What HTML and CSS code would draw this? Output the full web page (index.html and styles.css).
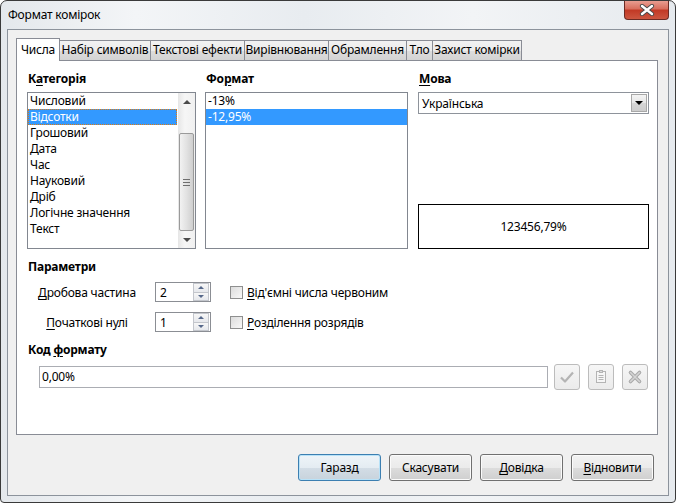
FILE: index.html
```html
<!DOCTYPE html>
<html lang="uk">
<head>
    <meta charset="UTF-8">
    <title>Формат комірок</title>
    <link rel="stylesheet" href="styles.css">
</head>
<body>
    <div class="window">
        <!-- Title bar -->
        <div class="titlebar">
            <span class="title">Формат комірок</span>
            <div class="close">
                <svg width="16" height="12" viewBox="0 0 16 12">
                    <path d="M3 2 L13 10 M13 2 L3 10" stroke="#4a4a4a" stroke-width="4.2" stroke-linecap="round"/>
                    <path d="M3 2 L13 10 M13 2 L3 10" stroke="#fff" stroke-width="2.4" stroke-linecap="round"/>
                </svg>
            </div>
        </div>

        <div class="client">
            <!-- Tabs -->
            <div class="tabs">
                <div class="tab active w-chysla">Числа</div>
                <div class="tab w-nabir">Набір символів</div>
                <div class="tab w-efekty">Текстові ефекти</div>
                <div class="tab w-vyr">Вирівнювання</div>
                <div class="tab w-obr">Обрамлення</div>
                <div class="tab w-tlo">Тло</div>
                <div class="tab w-zahyst">Захист комірки</div>
            </div>

            <div class="page">
                <div class="top">
                    <!-- Category -->
                    <div class="col col-cat">
                        <div class="heading">К<u>а</u>тегорія</div>
                        <div class="listbox">
                            <div class="items">
                                <div class="item">Числовий</div>
                                <div class="item selected focus">Відсотки</div>
                                <div class="item">Грошовий</div>
                                <div class="item">Дата</div>
                                <div class="item">Час</div>
                                <div class="item">Науковий</div>
                                <div class="item">Дріб</div>
                                <div class="item">Логічне значення</div>
                                <div class="item">Текст</div>
                            </div>
                            <div class="scrollbar">
                                <div class="sb-btn"><span class="tri-up"></span></div>
                                <div class="sb-track">
                                    <div class="sb-thumb"><span class="grip"></span></div>
                                </div>
                                <div class="sb-btn"><span class="tri-down"></span></div>
                            </div>
                        </div>
                    </div>

                    <!-- Format -->
                    <div class="col col-fmt">
                        <div class="heading">Фо<u>р</u>мат</div>
                        <div class="listbox">
                            <div class="items">
                                <div class="item">-13%</div>
                                <div class="item selected">-12,95%</div>
                            </div>
                        </div>
                    </div>

                    <!-- Language -->
                    <div class="col col-lang">
                        <div class="heading"><u>М</u>ова</div>
                        <div class="combo">
                            <span class="combo-text">Українська</span>
                            <div class="combo-btn"><span class="tri-down dark"></span></div>
                        </div>
                        <div class="preview">123456,79%</div>
                    </div>
                </div>

                <!-- Options -->
                <div class="heading params-h">Параметри</div>
                <div class="param-row first">
                    <div class="plabel"><u>Д</u>робова частина</div>
                    <div class="spin">
                        <span class="spin-val">2</span>
                        <div class="spin-btns">
                            <div class="spin-btn"><span class="tri-up small"></span></div>
                            <div class="spin-btn"><span class="tri-down small"></span></div>
                        </div>
                    </div>
                    <span class="checkbox"></span>
                    <span class="cb-label"><u>В</u>ід'ємні числа червоним</span>
                </div>
                <div class="param-row">
                    <div class="plabel"><u>П</u>очаткові нулі</div>
                    <div class="spin">
                        <span class="spin-val">1</span>
                        <div class="spin-btns">
                            <div class="spin-btn"><span class="tri-up small"></span></div>
                            <div class="spin-btn"><span class="tri-down small"></span></div>
                        </div>
                    </div>
                    <span class="checkbox"></span>
                    <span class="cb-label"><u>Р</u>озділення розрядів</span>
                </div>

                <!-- Format code -->
                <div class="heading code-h">Код <u>ф</u>ормату</div>
                <div class="code-row">
                    <div class="code-input">0,00%</div>
                    <div class="icon-btn">
                        <svg width="18" height="18" viewBox="0 0 18 18">
                            <path d="M3 9.5 L7 13.5 L15 4.5" fill="none" stroke="#b4b4b4" stroke-width="2.2" stroke-linejoin="round"/>
                        </svg>
                    </div>
                    <div class="icon-btn">
                        <svg width="18" height="18" viewBox="0 0 18 18">
                            <rect x="4.5" y="3.5" width="9" height="11" fill="#f6f6f6" stroke="#b4b4b4"/>
                            <rect x="7.5" y="2.5" width="3" height="2" fill="#dcdcdc" stroke="#b4b4b4"/>
                            <path d="M6.5 7.5 H11.5 M6.5 9.5 H11.5 M6.5 11.5 H11.5" stroke="#b4b4b4"/>
                        </svg>
                    </div>
                    <div class="icon-btn">
                        <svg width="18" height="18" viewBox="0 0 18 18">
                            <path d="M4.5 4.5 L13.5 13.5 M13.5 4.5 L4.5 13.5" stroke="#a8a8a8" stroke-width="3.6" stroke-linecap="round"/>
                            <path d="M4.5 4.5 L13.5 13.5 M13.5 4.5 L4.5 13.5" stroke="#d4d4d4" stroke-width="1.6" stroke-linecap="round"/>
                        </svg>
                    </div>
                </div>
            </div>

            <!-- Dialog buttons -->
            <div class="buttons">
                <div class="btn default">Гаразд</div>
                <div class="btn">Скасувати</div>
                <div class="btn"><u>Д</u>овідка</div>
                <div class="btn"><u>В</u>ідновити</div>
            </div>
        </div>
    </div>
</body>
</html>
```

FILE: styles.css
```css
* {
    box-sizing: border-box;
}

body {
    margin: 0;
    font-family: "Noto Sans", "DejaVu Sans", sans-serif;
    font-size: 12px;
    letter-spacing: -0.2px;
    color: #000;
    background: #fff;
}

u {
    text-decoration: underline;
    text-underline-offset: 2px;
}

/* window frame */
.window {
    width: 676px;
    height: 503px;
    border: 1px solid #3a3a3a;
    border-radius: 7px 7px 4px 4px;
    background: linear-gradient(90deg, #e4e8ec 0%, #f3f5f7 20%, #e8ecf0 45%, #f2f4f6 70%, #e6eaee 100%);
    display: flex;
    flex-direction: column;
    overflow: hidden;
}

.titlebar {
    height: 28px;
    display: flex;
    align-items: flex-start;
    padding-left: 7px;
}

.title {
    line-height: 28px;
}

.close {
    margin-left: auto;
    margin-right: 6px;
    margin-top: -1px;
    width: 45px;
    height: 20px;
    border: 1px solid #6b2b24;
    border-top: none;
    border-radius: 0 0 4px 4px;
    background: linear-gradient(#eba397 0%, #d9705f 45%, #c23a26 55%, #cc5640 100%);
    display: flex;
    align-items: center;
    justify-content: center;
}

/* client area */
.client {
    flex: 1;
    margin: 0 6px 6px 6px;
    border: 1px solid #8c939c;
    background: #f0f0f0;
    padding: 8px 10px 0 8px;
    display: flex;
    flex-direction: column;
}

.tabs {
    display: flex;
    align-items: flex-end;
    height: 22px;
}

.tab {
    height: 20px;
    line-height: 18px;
    text-align: center;
    white-space: nowrap;
    overflow: hidden;
    border: 1px solid #898c95;
    border-bottom: none;
    margin-left: -1px;
    background: linear-gradient(#f2f2f2 0%, #ebebeb 50%, #dddddd 50%, #d3d3d3 100%);
}

.tab.active {
    margin-left: 0;
    height: 23px;
    line-height: 21px;
    margin-bottom: -1px;
    background: #fff;
    position: relative;
    z-index: 1;
}

.w-chysla { width: 44px; }
.w-nabir { width: 92px; }
.w-efekty { width: 95px; }
.w-vyr { width: 85px; }
.w-obr { width: 79px; }
.w-tlo { width: 27px; }
.w-zahyst { width: 90px; }

.page {
    height: 375px;
    border: 1px solid #898c95;
    background: #fff;
    padding: 10px 8px 0 10px;
}

.top {
    display: flex;
}

.col {
    display: flex;
    flex-direction: column;
}

.col-cat { width: 169px; }
.col-fmt { width: 203px; margin-left: 9px; }
.col-lang { width: 231px; margin-left: 10px; }

.heading {
    height: 16px;
    line-height: 16px;
    font-weight: bold;
    padding-left: 1px;
    margin-bottom: 5px;
}

.listbox {
    height: 157px;
    border: 1px solid #828790;
    background: #fff;
    display: flex;
}

.items {
    flex: 1;
}

.item {
    height: 16px;
    line-height: 16px;
    padding-left: 2px;
    white-space: nowrap;
}

.item.selected {
    background: #3399ff;
    color: #fff;
}

.item.focus {
    margin-right: 1px;
    border: 1px dotted #e07b10;
    line-height: 14px;
    padding-left: 1px;
}

/* scrollbar */
.scrollbar {
    width: 17px;
    display: flex;
    flex-direction: column;
    background: linear-gradient(90deg, #e6e6e6, #f6f6f6 40%, #f0f0f0);
}

.sb-btn {
    height: 17px;
    display: flex;
    align-items: center;
    justify-content: center;
}

.sb-track {
    flex: 1;
    padding-top: 23px;
}

.sb-thumb {
    height: 98px;
    margin: 0 1px;
    border: 1px solid #9a9a9a;
    border-radius: 2px;
    background: linear-gradient(90deg, #f2f2f2, #e2e2e2 50%, #cfcfcf);
    display: flex;
    align-items: center;
    justify-content: center;
}

.grip {
    width: 7px;
    height: 7px;
    border-top: 1px solid #6e6e6e;
    border-bottom: 1px solid #6e6e6e;
    background: linear-gradient(transparent 2px, #6e6e6e 2px, #6e6e6e 3px, transparent 3px);
}

.tri-up,
.tri-down {
    width: 0;
    height: 0;
    border-left: 4px solid transparent;
    border-right: 4px solid transparent;
}

.tri-up {
    border-bottom: 4px solid #4a4a4a;
}

.tri-down {
    border-top: 4px solid #4a4a4a;
}

.tri-down.dark {
    border-top-color: #000;
}

.tri-up.small {
    border-left-width: 3px;
    border-right-width: 3px;
    border-bottom: 3px solid #56688a;
}

.tri-down.small {
    border-left-width: 3px;
    border-right-width: 3px;
    border-top: 3px solid #56688a;
}

/* language */
.combo {
    height: 22px;
    border: 1px solid #8e939b;
    background: #fff;
    display: flex;
    align-items: center;
}

.combo-text {
    flex: 1;
    padding-left: 3px;
}

.combo-btn {
    width: 16px;
    height: 18px;
    margin-right: 1px;
    border: 1px solid #a8a8a8;
    background: linear-gradient(#f4f4f4, #e6e6e6 50%, #d6d6d6 50%, #cdcdcd);
    display: flex;
    align-items: center;
    justify-content: center;
}

.preview {
    margin-top: auto;
    height: 45px;
    border: 1px solid #000;
    display: flex;
    align-items: center;
    justify-content: center;
}

/* options */
.params-h {
    margin-top: 10px;
    margin-bottom: 0;
}

.param-row {
    display: flex;
    align-items: center;
    height: 20px;
    margin-top: 10px;
}

.param-row.first {
    margin-top: 7px;
}

.plabel {
    width: 120px;
    text-align: center;
    margin-right: 8px;
}

.spin {
    width: 56px;
    height: 20px;
    border: 1px solid #8b8e94;
    display: flex;
    align-items: center;
}

.spin-val {
    flex: 1;
    padding-left: 4px;
}

.spin-btns {
    width: 16px;
    height: 18px;
    margin-right: 1px;
    display: flex;
    flex-direction: column;
}

.spin-btn {
    flex: 1;
    border: 1px solid #c3c6cc;
    background: linear-gradient(#f7f7f7, #e6e8ec);
    display: flex;
    align-items: center;
    justify-content: center;
}

.spin-btn + .spin-btn {
    border-top: none;
}

.checkbox {
    width: 13px;
    height: 13px;
    margin-left: 19px;
    border: 1px solid #8e8f8f;
    background: linear-gradient(135deg, #dcdcdc, #f8f8f8);
}

.cb-label {
    margin-left: 4px;
}

/* format code */
.code-h {
    margin-top: 10px;
    margin-bottom: 6px;
}

.code-row {
    display: flex;
    align-items: center;
    padding-left: 12px;
    height: 26px;
}

.code-input {
    width: 509px;
    height: 22px;
    line-height: 20px;
    border: 1px solid #abadb3;
    padding-left: 2px;
}

.icon-btn {
    width: 26px;
    height: 26px;
    margin-left: 8px;
    border: 1px solid #bcbcbc;
    border-radius: 3px;
    background: linear-gradient(#f6f6f6, #ebebeb);
    display: flex;
    align-items: center;
    justify-content: center;
}

.code-input + .icon-btn {
    margin-left: 6px;
}

/* dialog buttons */
.buttons {
    display: flex;
    justify-content: flex-end;
    gap: 8px;
    margin-top: 19px;
    margin-right: 4px;
}

.btn {
    width: 83px;
    height: 27px;
    line-height: 25px;
    text-align: center;
    border: 1px solid #707070;
    border-radius: 3px;
    background: linear-gradient(#f2f2f2 0%, #ebebeb 50%, #dddddd 50%, #cfcfcf 100%);
    box-shadow: inset 0 0 0 1px #fbfbfb;
}

.btn.default {
    border-color: #3c7fb1;
    box-shadow: inset 0 0 0 1px #b8e2f8;
    background: linear-gradient(#eef4f8 0%, #e4ecf2 50%, #d3dde6 50%, #c8d3dc 100%);
}
```
